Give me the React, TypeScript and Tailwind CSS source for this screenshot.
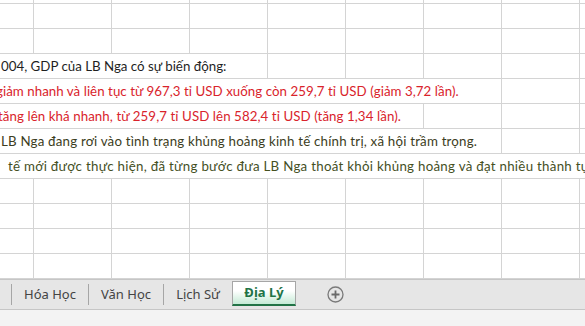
import React from "react";

const cellFont = { fontFamily: "Lato, 'Liberation Sans', sans-serif" };

function Cells({ widths }: { widths: number[] }) {
  return (
    <>
      {widths.map((w, i) => (
        <div key={i} className="h-full shrink-0 border-r border-[#d4d4d4]" style={{ width: w }} />
      ))}
    </>
  );
}

const STD = [34, 78, 78, 78, 78, 78, 78, 78];

function EmptyRow() {
  return (
    <div className="flex h-[25px] border-t border-[#d4d4d4]">
      <Cells widths={STD} />
      <div className="grow" />
    </div>
  );
}

function TextRow({
  text,
  width,
  rest,
  color,
  offset,
  tracking,
}: {
  text: string;
  width: number;
  rest: number[];
  color: string;
  offset: number;
  tracking: string;
}) {
  return (
    <div className="flex h-[25px] border-t border-[#d4d4d4]">
      <div
        className={`relative h-full shrink-0 overflow-hidden whitespace-nowrap flex items-end pb-[4px] text-[13.3px] leading-[16px] border-r border-[#d4d4d4] ${color} ${tracking}`}
        style={{ ...cellFont, width }}
      >
        <span className="block" style={{ marginLeft: offset }}>{text}</span>
      </div>
      <Cells widths={rest} />
      <div className="grow" />
    </div>
  );
}

export default function App() {
  return (
    <div className="w-[585px] h-[326px] overflow-hidden bg-white flex flex-col">
      <div className="h-[3px] flex">
        <Cells widths={STD} />
      </div>
      <EmptyRow />
      <EmptyRow />
      <TextRow
        text="004, GDP của LB Nga có sự biến động:"
        width={268}
        rest={[78, 78, 78, 78]}
        color="text-[#1f1f1f]"
        offset={1}
        tracking="tracking-[0px]"
      />
      <TextRow
        text="giảm nhanh và liên tục từ 967,3 tỉ USD xuống còn 259,7 tỉ USD (giảm 3,72 lần)."
        width={502}
        rest={[78]}
        color="text-[#d9232b]"
        offset={-4}
        tracking="tracking-[0.04px]"
      />
      <TextRow
        text="tăng lên khá nhanh, từ 259,7 tỉ USD lên 582,4 tỉ USD (tăng 1,34 lần)."
        width={424}
        rest={[78, 78]}
        color="text-[#d9232b]"
        offset={-2}
        tracking="tracking-[0.07px]"
      />
      <TextRow
        text="LB Nga đang rơi vào tình trạng khủng hoảng kinh tế chính trị, xã hội trầm trọng."
        width={502}
        rest={[78]}
        color="text-[#3c3d22]"
        offset={1}
        tracking="tracking-[0.2px]"
      />
      <div className="flex h-[25px] border-t border-[#d4d4d4]">
        <div
          className="h-full w-full overflow-hidden whitespace-nowrap flex items-end pb-[4px] text-[13.3px] leading-[16px] tracking-[0.28px] text-[#45501f]"
          style={cellFont}
        >
          <span className="block ml-[8px]">
            tế mới được thực hiện, đã từng bước đưa LB Nga thoát khỏi khủng hoảng và đạt nhiều thành tựu
          </span>
        </div>
      </div>
      <EmptyRow />
      <EmptyRow />
      <EmptyRow />
      <EmptyRow />
      <div className="h-px bg-[#d4d4d4]" />
      {/* Tab bar */}
      <div
        className="h-[31px] shrink-0 bg-[#e6e6e6] border-t border-[#c2c2c2] border-b border-[#c6c6c6] flex items-stretch text-[13px] text-[#444]"
        style={{ fontFamily: "'Noto Sans', 'Open Sans', sans-serif" }}
      >
        <div className="w-[11px] shrink-0" />
        <div className="w-px my-[4px] bg-[#a6a6a6] shrink-0" />
        <div className="w-[76px] shrink-0 flex items-center justify-center">Hóa Học</div>
        <div className="w-px my-[4px] bg-[#a6a6a6] shrink-0" />
        <div className="w-[74px] shrink-0 flex items-center justify-center">Văn Học</div>
        <div className="w-px my-[4px] bg-[#a6a6a6] shrink-0" />
        <div className="w-[68px] shrink-0 flex items-center justify-center">Lịch Sử</div>
        <div className="w-[64px] shrink-0 mt-[1px] mb-[3px] border-x border-t border-[#a6a6a6] bg-gradient-to-b from-white from-40% to-[#c4ead5] border-b-2 border-b-[#217346] flex items-center justify-center font-bold text-[#217346]">
          Địa Lý
        </div>
        <div className="w-[79px] shrink-0 flex items-center justify-center">
          <svg width="17" height="17" viewBox="0 0 17 17">
            <circle cx="8.5" cy="8.5" r="7.5" fill="none" stroke="#7a7a7a" strokeWidth="1.3" />
            <path d="M8.5 4.5v8M4.5 8.5h8" stroke="#6a6a6a" strokeWidth="1.8" />
          </svg>
        </div>
        <div className="grow" />
      </div>
      <div className="grow bg-[#f3f3f3]" />
    </div>
  );
}
